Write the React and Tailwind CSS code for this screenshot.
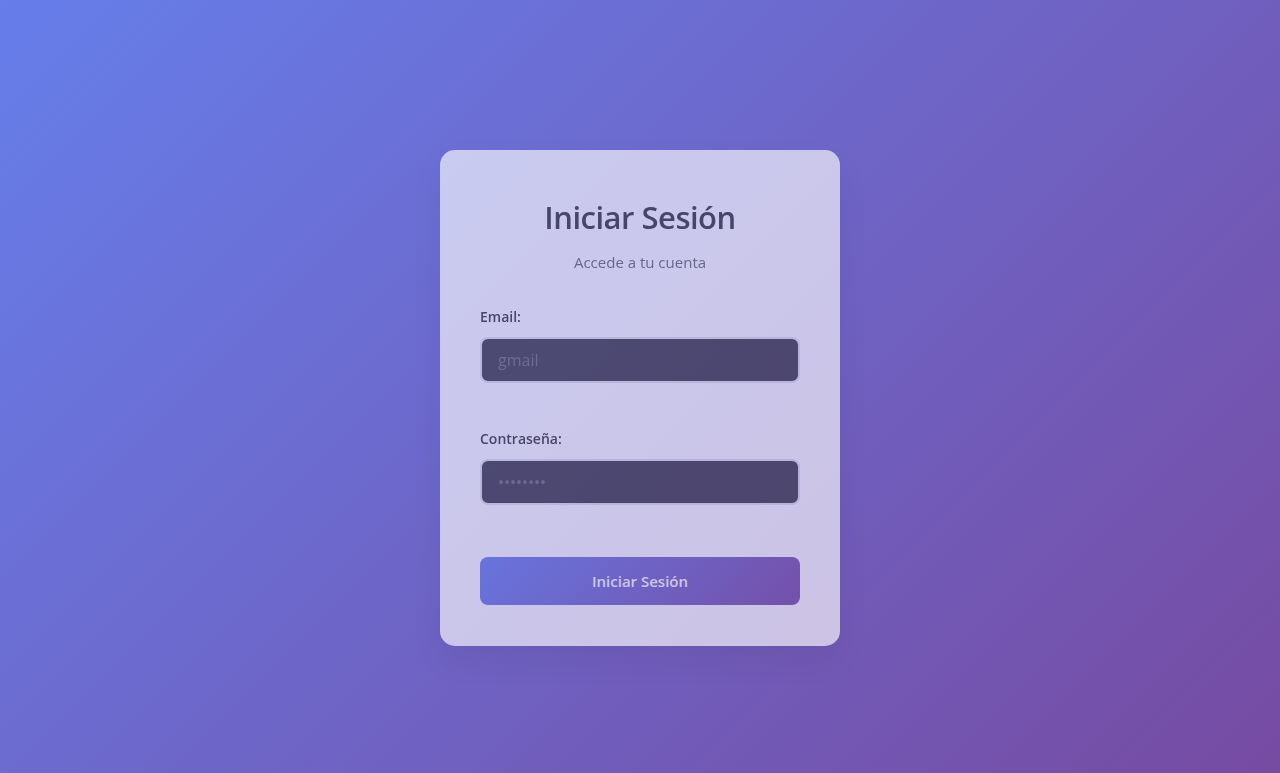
import React from "react";

const App = () => {
  return (
    <div
      className="min-h-screen w-full flex items-center justify-center pt-[23px] bg-[linear-gradient(135deg,#667eea_0%,#764ba2_100%)]"
      style={{ fontFamily: '"Open Sans", "Noto Sans", sans-serif' }}
    >
      <div className="w-[400px] bg-white rounded-[15px] px-10 pt-10 pb-[41px] opacity-[0.64] shadow-[0_15px_35px_rgba(0,0,0,0.1)]">
        <div className="text-center">
          <h1 className="text-[31px] leading-[38px] font-semibold text-[#333] mt-[8px] tracking-[-0.5px]">
            Iniciar Sesión
          </h1>
          <p className="mt-[15px] text-[15px] text-[#666]">Accede a tu cuenta</p>
        </div>

        <form className="mt-[33px]" onSubmit={(e) => e.preventDefault()}>
          <div className="mb-[45px]">
            <label className="block text-[14px] font-semibold text-[#333] mb-[10px]">
              Email:
            </label>
            <input
              type="email"
              placeholder="gmail"
              className="w-full h-[46px] px-[16px] rounded-[8px] border-2 border-[#e1e5e9] bg-[#3a3940] text-[16px] text-white placeholder:text-[#6f6f78] outline-none"
            />
          </div>
          <div>
            <label className="block text-[14px] font-semibold text-[#333] mb-[10px]">
              Contraseña:
            </label>
            <input
              type="password"
              placeholder="••••••••"
              className="w-full h-[46px] px-[16px] rounded-[8px] border-2 border-[#e1e5e9] bg-[#3a3940] text-[16px] text-white placeholder:text-[#6f6f78] outline-none"
            />
          </div>
          <button
            type="submit"
            className="mt-[52px] w-full h-[48px] rounded-[8px] bg-[linear-gradient(135deg,#667eea_0%,#764ba2_100%)] text-white text-[15px] font-semibold"
          >
            Iniciar Sesión
          </button>
        </form>
      </div>
    </div>
  );
};

export default App;
